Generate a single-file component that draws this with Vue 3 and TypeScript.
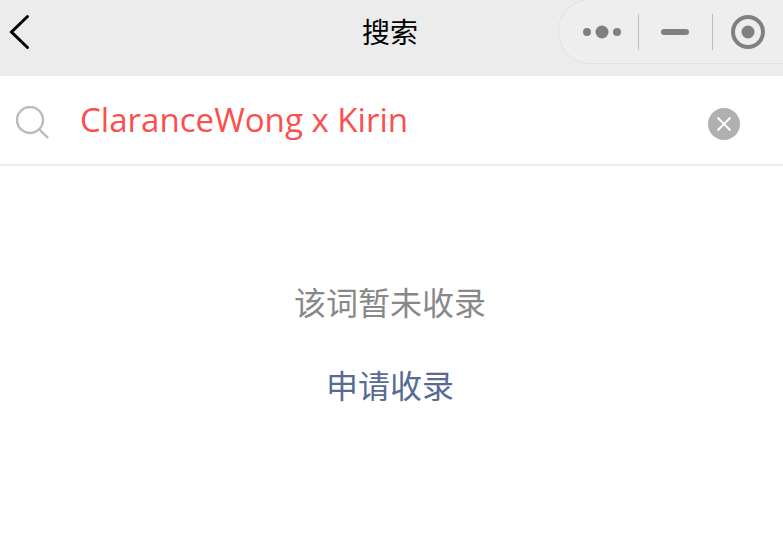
<template>
  <div class="page">
    <header class="nav">
      <svg class="back" width="32" height="52" viewBox="0 0 32 52">
        <path d="M27.500 16.500 L11.500 32 L27.500 47.500" fill="none" stroke="#000" stroke-width="3" stroke-linecap="round" />
      </svg>
      <h1 class="title">搜索</h1>
      <div class="capsule">
        <svg width="38" height="14" viewBox="0 0 38 14" class="more">
          <circle cx="4" cy="7" r="4" />
          <circle cx="19" cy="7" r="6.500" />
          <circle cx="34" cy="7" r="4" />
        </svg>
        <i class="sep sep-a"></i>
        <span class="minus"></span>
        <i class="sep sep-b"></i>
        <svg width="34" height="34" viewBox="0 0 34 34" class="record">
          <circle cx="17" cy="17" r="15" fill="none" stroke="#808080" stroke-width="4" />
          <circle cx="17" cy="17" r="6.500" fill="#808080" />
        </svg>
      </div>
    </header>

    <div class="search">
      <svg class="glass" width="34" height="34" viewBox="0 0 34 34">
        <circle cx="14" cy="14" r="13" fill="none" stroke="#bbb" stroke-width="2.400" />
        <path d="M23.500 23.500 L32 32" fill="none" stroke="#bbb" stroke-width="2.400" />
      </svg>
      <span class="query">{{ query }}</span>
      <span class="clear">
        <svg width="16" height="16" viewBox="0 0 16 16">
          <path d="M1.500 1.500 L14.500 14.500 M14.500 1.500 L1.500 14.500" stroke="#fff" stroke-width="1.800" fill="none" />
        </svg>
      </span>
    </div>

    <main class="empty">
      <p class="hint">该词暂未收录</p>
      <a class="apply">申请收录</a>
    </main>
  </div>
</template>

<script setup lang="ts">
const query = "ClaranceWong x Kirin";
</script>

<style>
html,
body {
  margin: 0;
  background: #fff;
}
</style>

<style scoped>
.page {
  width: 783px;
  height: 535px;
  overflow: hidden;
  font-family: "Open Sans", "Noto Sans CJK SC", sans-serif;
}

.nav {
  position: relative;
  height: 76px;
  background: #ececec;
  display: flex;
  align-items: center;
  justify-content: center;
  padding-right: 3px;
  box-sizing: border-box;
}

.back {
  position: absolute;
  left: 0;
  top: 0;
}

.title {
  margin: 0 0 14px;
  font-size: 28px;
  font-weight: 400;
  line-height: 38px;
  color: #000;
  font-family: "Noto Sans CJK SC", sans-serif;
}

.capsule {
  position: absolute;
  left: 558px;
  top: -1px;
  width: 280px;
  height: 65px;
  box-sizing: border-box;
  border: 1px solid #e0e0e0;
  border-radius: 32px;
  background: #eee;
}

.capsule > * {
  position: absolute;
}

.more {
  left: 24px;
  top: 25px;
  fill: #808080;
}

.sep {
  top: 14px;
  width: 1px;
  height: 36px;
  background: #bcbcbc;
}

.sep-a {
  left: 79px;
}

.sep-b {
  left: 153px;
}

.minus {
  left: 102px;
  top: 29px;
  width: 28px;
  height: 6px;
  border-radius: 3px;
  background: #808080;
}

.record {
  left: 172px;
  top: 15px;
}

.search {
  height: 88px;
  border-bottom: 2px solid #ececec;
  display: flex;
  align-items: center;
  padding-left: 16px;
}

.glass {
  flex: none;
  margin-top: 6px;
}

.query {
  margin-left: 30px;
  font-size: 33.100px;
  color: #fb4f4f;
  line-height: 88px;
}

.clear {
  position: absolute;
  left: 708px;
  top: 108px;
  width: 32px;
  height: 32px;
  border-radius: 50%;
  background: #b0b0b0;
  display: flex;
  align-items: center;
  justify-content: center;
}

.empty {
  display: flex;
  flex-direction: column;
  align-items: center;
  padding: 112px 3px 0 0;
  font-family: "Noto Sans CJK SC", sans-serif;
}

.hint {
  margin: 0;
  font-size: 32px;
  line-height: 46px;
  color: #888;
}

.apply {
  margin-top: 37px;
  font-size: 32px;
  line-height: 46px;
  color: #576b95;
}
</style>
